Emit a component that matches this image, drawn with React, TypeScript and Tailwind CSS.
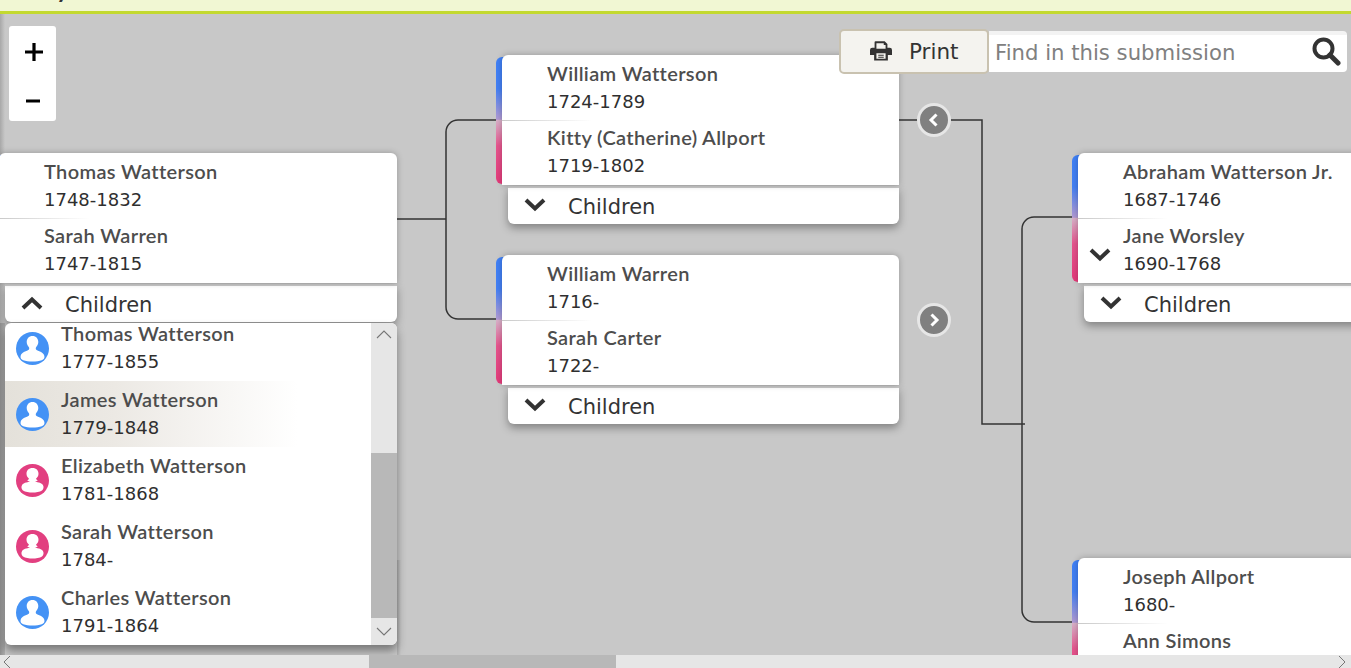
import React from "react";

const NAME = "font-['Lato','Liberation_Sans',sans-serif] font-semibold text-[20px] tracking-[0.35px] leading-[26px] text-[#4d4d4d]";
const DATE = "mt-[3px] font-['DejaVu_Sans','Liberation_Sans',sans-serif] text-[18px] leading-[25px] text-[#2f2f2f]";

function Chevron({ up, className }: { up?: boolean; className?: string }) {
  return (
    <svg width="22" height="14" viewBox="0 0 22 14" className={className}>
      <polyline
        points={up ? "2,12 11,3.5 20,12" : "2,2 11,10.5 20,2"}
        fill="none"
        stroke="#333"
        strokeWidth="4"
      />
    </svg>
  );
}

function Person({ female }: { female?: boolean }) {
  return (
    <svg width="33" height="33" viewBox="0 0 33 33" className="shrink-0">
      <circle cx="16.5" cy="16.5" r="16.5" fill={female ? "#e23f80" : "#4492f5"} />
      <path
        d={
          female
            ? "M16.5 4c3.8 0 6 2.400 6 5.800 0 2-1 3.600-2.400 4.600 0 .8.500 1.300 1.800 1.900-1 .8-2 1.100-2.800 1.300.9.5 6.200.9 7.800 3.400 1 1.600.9 4.200-.9 5.500-2.300 1.500-6.100 2-9.500 2s-7.200-.5-9.500-2c-1.800-1.300-1.900-3.900-.9-5.500 1.600-2.500 6.900-2.900 7.800-3.400-.8-.2-1.800-.5-2.800-1.300 1.300-.6 1.800-1.100 1.800-1.900-1.400-1-2.400-2.600-2.400-4.600 0-3.400 2.200-5.800 6-5.800z"
            : "M16.500 4c3.700 0 5.800 2.700 5.800 6 0 2.200-1 3.700-2.100 4.900-.6.700-.6 2.200.1 2.800 1.400 1.200 7.300 2 8.100 6.300.4 2.200-.7 3.500-2.600 4.200-2.400.9-5.700 1.300-9.300 1.300s-6.900-.4-9.300-1.300c-1.900-.7-3-2-2.600-4.200.8-4.300 6.700-5.100 8.100-6.300.7-.6.7-2.100.1-2.800-1.100-1.200-2.100-2.700-2.100-4.900 0-3.300 2.100-6 5.800-6z"
        }
        fill="#fff"
      />
    </svg>
  );
}

type CardProps = {
  left: number;
  top: number;
  width?: number;
  a: string;
  ad: string;
  b: string;
  bd: string;
  up?: boolean;
  marker?: boolean;
};

function Card({ left, top, width = 403, a, ad, b, bd, up, marker }: CardProps) {
  return (
    <div className="absolute" style={{ left, top, width }}>
      <div className="relative h-[131px] pl-[6px]">
        <div className="absolute left-0 top-[2px] bottom-[2px] w-[16px] rounded-l-[6px] bg-[linear-gradient(#3f80f6_0%,#4480f4_25%,#b09ad4_49%,#d8b0c8_50%,#e6558e_70%,#e43a7a_100%)]" />
        <div className="relative h-[130px] rounded-[6px] rounded-b-none bg-white shadow-[0_0_6px_rgba(0,0,0,0.25)]">
          <div className="pl-[45px] h-[65px] pt-[5px]">
            <div className={NAME}>{a}</div>
            <div className={DATE}>{ad}</div>
          </div>
          <div className="h-px w-[90px] bg-[linear-gradient(to_right,#c9c9c9,#ffffff)]" />
          <div className="pl-[45px] pt-[3px]">
            <div className={NAME}>{b}</div>
            <div className={DATE}>{bd}</div>
          </div>
          {marker && <Chevron className="absolute left-[11px] top-[95px]" />}
        </div>
      </div>
      <div className="ml-[12px] flex h-[38px] items-center rounded-b-[6px] border-t-2 border-[#c8c8c8] bg-white pl-[16px] shadow-[0_4px_8px_rgba(0,0,0,0.35)]">
        <Chevron up={up} className="mb-[3px]" />
        <span className="ml-[22px] mt-[2px] font-['DejaVu_Sans',sans-serif] text-[21px] leading-none text-[#333]">Children</span>
      </div>
    </div>
  );
}

function Round({ top, left, dir }: { top: number; left: number; dir: "l" | "r" }) {
  return (
    <div
      className="absolute flex h-[34px] w-[34px] items-center justify-center rounded-full border-[3px] border-[#e6e6e6] bg-[#808080]"
      style={{ top, left }}
    >
      <svg width="14" height="16" viewBox="0 0 14 16">
        <polyline
          points={dir === "l" ? "9.500,2.500 4,8 9.500,13.500" : "4.500,2.500 10,8 4.500,13.500"}
          fill="none"
          stroke="#fff"
          strokeWidth="3"
        />
      </svg>
    </div>
  );
}

function ChildRow({ name, dates, female, hover }: { name: string; dates: string; female?: boolean; hover?: boolean }) {
  return (
    <div
      className={
        "flex h-[66px] shrink-0 items-center pl-[11px] " +
        (hover ? "bg-[linear-gradient(to_right,#e4e1da_0%,#ece9e4_30%,#ffffff_80%)]" : "")
      }
    >
      <Person female={female} />
      <div className="ml-[12px] pb-[3px]">
        <div className={NAME}>{name}</div>
        <div className={DATE}>{dates}</div>
      </div>
    </div>
  );
}

export default function App() {
  return (
    <div className="relative h-[668px] w-[1351px] overflow-hidden bg-[#c8c8c8]">
      <header className="h-[14px] overflow-hidden border-b-[3px] border-[#c3d92f] bg-[#f1f7d3]">
        <div className="-mt-[26px] font-['Lato',sans-serif] text-[24px] font-bold leading-[30px] text-[#333]">Family</div>
      </header>

      <div className="absolute left-0 top-[14px] h-[309px] w-[5px] bg-[linear-gradient(to_right,#a8a8a8,#c8c8c8)]" />
      <div className="absolute left-0 top-[323px] h-[332px] w-[5px] bg-[linear-gradient(to_right,#8f8f8f,#b0b0b0)]" />
      <div className="absolute left-[397px] top-[560px] h-[95px] w-[4px] bg-[linear-gradient(to_right,#adadad,#c8c8c8)]" />

      <svg className="absolute left-0 top-0" width="1351" height="668" fill="none" stroke="#333" strokeWidth="1.5">
        <path d="M397 219H446" />
        <path d="M496 120H458a12 12 0 0 0-12 12V307a12 12 0 0 0 12 12H496" />
        <path d="M899 120H982V424H1025" />
        <path d="M1072 217H1034a12 12 0 0 0-12 12V610a12 12 0 0 0 12 12H1072" />
      </svg>

      <div className="absolute left-[9px] top-[26px] flex h-[95px] w-[47px] flex-col items-center justify-between rounded-[3px] bg-white pb-[9px] pt-[14px]">
        <svg width="20" height="24" viewBox="0 0 20 24" className="ml-[3px]">
          <path d="M10 3V21M1 12H19" stroke="#000" strokeWidth="3.2" />
        </svg>
        <svg width="16" height="6" viewBox="0 0 16 6" className="mb-[8px]">
          <path d="M1 3H15" stroke="#000" strokeWidth="3" />
        </svg>
      </div>

      <Card left={-7} top={153} width={404} a="Thomas Watterson" ad="1748-1832" b="Sarah Warren" bd="1747-1815" up />
      <Card left={496} top={55} a="William Watterson" ad="1724-1789" b="Kitty (Catherine) Allport" bd="1719-1802" />
      <Card left={496} top={255} a="William Warren" ad="1716-" b="Sarah Carter" bd="1722-" />
      <Card left={1072} top={153} a="Abraham Watterson Jr." ad="1687-1746" b="Jane Worsley" bd="1690-1768" marker />
      <Card left={1072} top={558} a="Joseph Allport" ad="1680-" b="Ann Simons" bd="" />

      <Round left={917} top={103} dir="l" />
      <Round left={917} top={303} dir="r" />

      <div className="absolute left-[5px] top-[323px] flex h-[322px] w-[392px] overflow-hidden rounded-[6px] bg-white shadow-[0_6px_10px_rgba(0,0,0,0.4)]">
        <div className="flex h-full w-[366px] flex-col justify-end">
          <ChildRow name="Thomas Watterson" dates="1777-1855" />
          <ChildRow name="James Watterson" dates="1779-1848" hover />
          <ChildRow name="Elizabeth Watterson" dates="1781-1868" female />
          <ChildRow name="Sarah Watterson" dates="1784-" female />
          <ChildRow name="Charles Watterson" dates="1791-1864" />
        </div>
        <div className="flex h-full w-[26px] flex-col bg-[#e6e6e6]">
          <div className="flex h-[130px] justify-center pt-[6px]">
            <svg width="16" height="10" viewBox="0 0 16 10">
              <polyline points="1,9 8,2 15,9" fill="none" stroke="#777" strokeWidth="1.1" />
            </svg>
          </div>
          <div className="h-[165px] bg-[#b8b8b8]" />
          <div className="flex flex-1 justify-center pt-[9px]">
            <svg width="16" height="10" viewBox="0 0 16 10">
              <polyline points="1,1 8,8 15,1" fill="none" stroke="#777" strokeWidth="1.1" />
            </svg>
          </div>
        </div>
      </div>

      <div className="absolute left-[839px] top-[29px] flex h-[45px] w-[150px] items-center rounded-[5px] border-2 border-[#c9c2b0] bg-[#f4f3ef] pl-[29px]">
        <svg width="22" height="21" viewBox="0 0 24 22" className="mb-[2px]">
          <path
            d="M6 1h10l3 3v4h2.5A2.5 2.5 0 0 1 24 10.500V16h-4.500v6H4.500v-6H0v-5.500A2.500 2.500 0 0 1 2.500 8H5V2a1 1 0 0 1 1-1zM7 3v6h10V5h-2V3zM7 14v6h10v-6zM9 15.500h6v1.200H9zM9 17.800h6V19H9z"
            fill="#333"
            fillRule="evenodd"
          />
        </svg>
        <span className="ml-[17px] font-['DejaVu_Sans',sans-serif] text-[21.5px] leading-none text-[#333]">Print</span>
      </div>

      <div className="absolute left-[989px] top-[31px] flex h-[41px] w-[358px] items-center justify-between rounded-r-[4px] border-t-[4px] border-[#f3f3f3] bg-white pl-[6px] pr-[6px]">
        <span className="mb-[2px] font-['DejaVu_Sans',sans-serif] text-[21.2px] leading-none text-[#808080]">Find in this submission</span>
        <svg width="30" height="30" viewBox="0 0 30 30" className="mb-[4px]">
          <circle cx="12.500" cy="11.500" r="9" fill="none" stroke="#333" strokeWidth="4" />
          <path d="M19 18L27 26" stroke="#333" strokeWidth="5" strokeLinecap="round" />
        </svg>
      </div>

      <div className="absolute bottom-0 left-0 flex h-[13px] w-[1351px] items-center justify-between bg-[#e6e6e6] pl-[3px] pr-[5px]">
        <svg width="8" height="13" viewBox="0 0 8 13">
          <polyline points="7,1 1,7 7,13" fill="none" stroke="#777" strokeWidth="1" />
        </svg>
        <svg width="8" height="13" viewBox="0 0 8 13">
          <polyline points="1,1 7,7 1,13" fill="none" stroke="#777" strokeWidth="1" />
        </svg>
      </div>
      <div className="absolute bottom-0 left-[369px] h-[13px] w-[247px] bg-[#b8b8b8]" />
    </div>
  );
}
